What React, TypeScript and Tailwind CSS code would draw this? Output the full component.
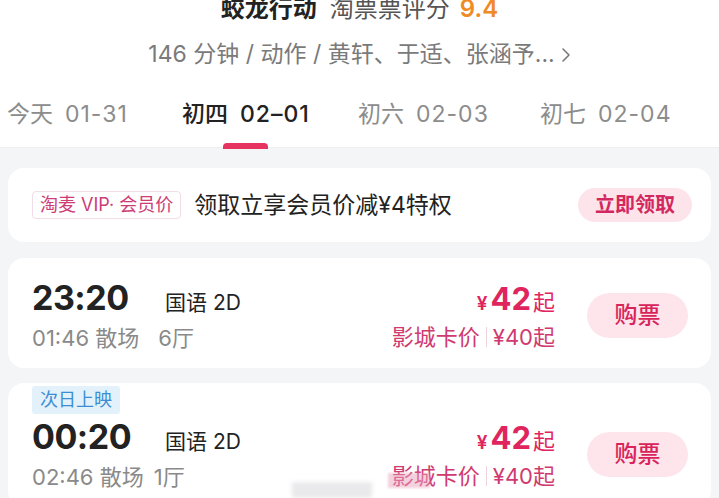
import React from 'react';

const tabs = [
  { label: '今天', date: '01-31', width: 'w-[175px]', active: false },
  { label: '初四', date: '02–01', width: 'w-[176px]', active: true },
  { label: '初六', date: '02-03', width: 'w-[182px]', active: false },
  { label: '初七', date: '02-04', width: 'w-[180px]', active: false },
];

function Chevron() {
  return (
    <svg width="10" height="16" viewBox="0 0 10 16" className="ml-[6px] mt-[2px]">
      <polyline points="2,2 8,8 2,14" fill="none" stroke="#7a7a7a" strokeWidth="1.6" strokeLinecap="round" strokeLinejoin="round" />
    </svg>
  );
}

function Session({ time, end, hall, hallGap, nextDay }: { time: string; end: string; hall: string; hallGap: string; nextDay?: boolean }) {
  return (
    <div className={`bg-white rounded-[16px] pl-[24px] pr-[23px] ${nextDay ? 'pt-[3px] pb-[18px]' : 'pt-[23px] pb-[18px]'}`}>
      {nextDay && (
        <div className="inline-flex h-[28px] items-center px-[8px] bg-[#e3f1fb] text-[#3b8ed3] text-[18px] leading-[28px] rounded-[3px] mb-[6px]">
          次日上映
        </div>
      )}
      <div className="flex items-center">
        <div className="flex-1">
          <div className="flex items-baseline">
            <div className="w-[133px] text-[34px] leading-[34px] font-bold text-[#222] tracking-[-0.5px]">{time}</div>
            <div className="text-[21px] leading-[34px] text-[#222]">国语 2D</div>
          </div>
          <div className="mt-[6px] text-[22px] leading-[24px] text-[#8a8a8a] flex">
            <span>{end} 散场</span>
            <span className={hallGap}>{hall}</span>
          </div>
        </div>
        <div className="flex flex-col items-end mr-[32px]">
          <div className="flex items-baseline text-[#e0245e]">
            <span className="text-[19px] font-semibold mr-[3px]">¥</span>
            <span className="text-[31px] leading-[34px] font-bold">42</span>
            <span className="text-[22px] ml-[2px]">起</span>
          </div>
          <div className="mt-[6px] flex items-center text-[22px] leading-[24px] text-[#d03a70]">
            <span>影城卡价</span>
            <span className="mx-[6px] w-px h-[20px] bg-[#eed3dc]" />
            <span>¥40起</span>
          </div>
        </div>
        <button className="w-[101px] h-[45px] rounded-full bg-[#fde5eb] text-[#d8245a] text-[23px] font-medium">
          购票
        </button>
      </div>
    </div>
  );
}

export default function App() {
  return (
    <div className="relative w-[719px] h-[498px] overflow-hidden bg-[#f4f5f7] font-['Inter','Noto_Sans_CJK_SC',sans-serif]">
      <div className="bg-white h-[151px] border-b border-[#efeff1]">
        <div className="-mt-[3px] h-[24px] flex justify-center items-baseline text-[24px] leading-[24px]">
          <span className="font-bold text-[#222]">蛟龙行动</span>
          <span className="ml-[13px] text-[#555]">淘票票评分</span>
          <span className="ml-[10px] font-semibold text-[#f08a24]">9.4</span>
        </div>
        <div className="mt-[21px] flex justify-center items-center text-[23px] leading-[24px] text-[#7a7a7a]">
          <span>146 分钟 / 动作 / 黄轩、于适、张涵予...</span>
          <Chevron />
        </div>
        <div className="mt-[35px] flex pl-[7px] text-[23px] leading-[26px]">
          {tabs.map((t) => (
            <div key={t.date} className={`${t.width} shrink-0 flex flex-col`}>
              <div className={`flex ${t.active ? 'text-[#222] font-medium' : 'text-[#8c8c8c]'}`}>
                <span>{t.label}</span>
                <span className="ml-[12px] tracking-[1px]">{t.date}</span>
              </div>
              {t.active && <div className="mt-[16px] ml-[41px] w-[45px] h-[6px] rounded-t-[4px] bg-[#e6335f]" />}
            </div>
          ))}
        </div>
      </div>

      <div className="px-[8px] pt-[20px] flex flex-col gap-[16px]">
        <div className="bg-white rounded-[16px] h-[74px] flex items-center pl-[24px] pr-[19px]">
          <div className="h-[28px] flex items-center px-[7px] border border-[#f1dde5] rounded-[4px] text-[18px] text-[#cc3d76] leading-[26px]">
            淘麦 VIP· 会员价
          </div>
          <div className="ml-[13px] flex-1 text-[23px] leading-[26px] text-[#222]">领取立享会员价减¥4特权</div>
          <button className="w-[114px] h-[34px] rounded-full bg-[#fde4ea] text-[#d3285f] text-[20px] font-semibold">
            立即领取
          </button>
        </div>

        <Session time="23:20" end="01:46" hall="6厅" hallGap="ml-[19px]" />
        <div className="-mt-[1px]">
          <Session time="00:20" end="02:46" hall="1厅" hallGap="ml-[10px]" nextDay />
        </div>
      </div>

      <div className="absolute left-[388px] top-[473px] w-[42px] h-[15px] bg-[#eaa4bd]/50 blur-[1px]" />
      <div className="absolute left-[292px] top-[482px] w-[80px] h-[16px] bg-[#e9e9eb] blur-[2px]" />
    </div>
  );
}
